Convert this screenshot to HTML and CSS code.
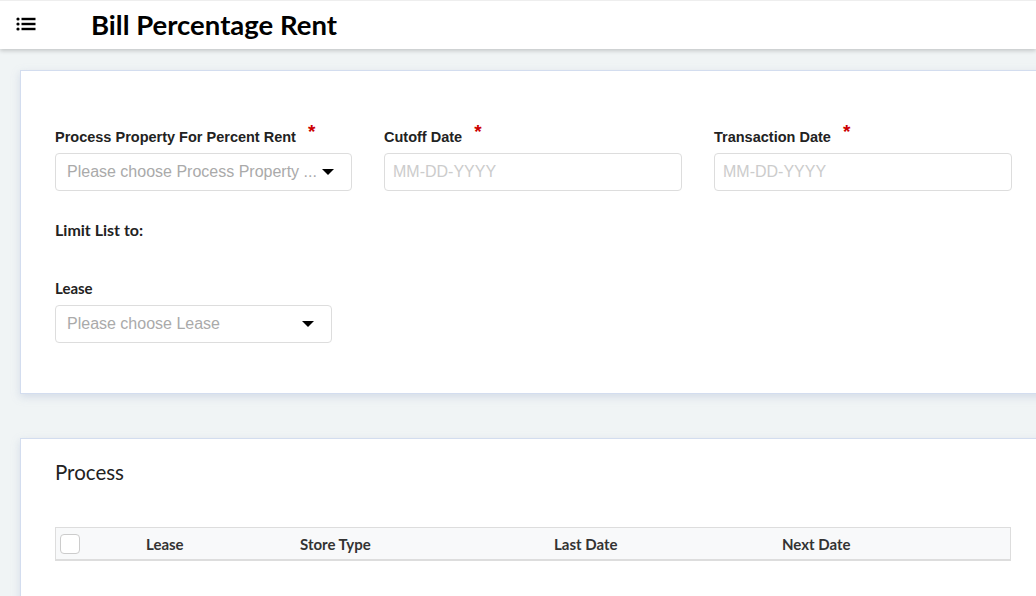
FILE: index.html
```html
<!DOCTYPE html>
<html lang="en">
<head>
  <meta charset="UTF-8" />
  <title>Bill Percentage Rent</title>
  <link rel="stylesheet" href="styles.css">
</head>
<body>
  <header class="topbar">
    <button class="menu-btn" title="Menu">
      <svg viewBox="0 0 20 16" width="20" height="16">
        <circle cx="2" cy="3" r="1.6" fill="#000"></circle>
        <circle cx="2" cy="8" r="1.6" fill="#000"></circle>
        <circle cx="2" cy="13" r="1.6" fill="#000"></circle>
        <rect x="5.5" y="1.8" width="14" height="2.4" fill="#000"></rect>
        <rect x="5.5" y="6.8" width="14" height="2.4" fill="#000"></rect>
        <rect x="5.5" y="11.8" width="14" height="2.4" fill="#000"></rect>
      </svg>
    </button>
    <h1>Bill Percentage Rent</h1>
  </header>

  <main class="content">
    <section class="card filters">
      <div class="field-row">
        <div class="field">
          <label>Process Property For Percent Rent <span class="req">*</span></label>
          <div class="select">
            <span class="placeholder">Please choose Process Property ...</span>
            <span class="caret"></span>
          </div>
        </div>
        <div class="field">
          <label>Cutoff Date <span class="req">*</span></label>
          <input type="text" class="date-input" placeholder="MM-DD-YYYY" />
        </div>
        <div class="field">
          <label>Transaction Date <span class="req">*</span></label>
          <input type="text" class="date-input" placeholder="MM-DD-YYYY" />
        </div>
      </div>

      <h4 class="limit-title">Limit List to:</h4>

      <div class="field lease-field">
        <label class="lato-label">Lease</label>
        <div class="select">
          <span class="placeholder">Please choose Lease</span>
          <span class="caret"></span>
        </div>
      </div>
    </section>

    <section class="card process">
      <h2>Process</h2>
      <table class="grid">
        <thead>
          <tr>
            <th class="col-check"><span class="checkbox"></span></th>
            <th class="col-lease">Lease</th>
            <th class="col-store">Store Type</th>
            <th class="col-last">Last Date</th>
            <th>Next Date</th>
          </tr>
        </thead>
      </table>
    </section>
  </main>
</body>
</html>
```

FILE: styles.css
```css
html, body {
  margin: 0;
  padding: 0;
  height: 100%;
  background: #f0f4f5;
  color: #222;
  font-family: Lato, "Liberation Sans", sans-serif;
  overflow: hidden;
}

.topbar {
  height: 49px;
  background: #fff;
  border-top: 1px solid #eee;
  box-sizing: border-box;
  display: flex;
  align-items: center;
  box-shadow: 0 2px 4px rgba(0, 0, 0, 0.18);
  position: relative;
  z-index: 1;
}

.menu-btn {
  background: none;
  border: none;
  padding: 0;
  margin: -2px 0 0 16px;
  width: 20px;
  height: 16px;
  display: flex;
  cursor: pointer;
}

.topbar h1 {
  margin: -2px 0 0 55px;
  font-size: 27.5px;
  font-weight: bold;
  color: #000;
}

.content {
  padding: 21px 0 0 20px;
  width: 1060px;
}

.card {
  background: #fff;
  border: 1px solid #d3ddef;
  box-shadow: 0 3px 8px rgba(160, 175, 205, 0.35);
  padding: 0 34px;
}

.filters {
  height: 324px;
  padding-top: 52px;
  box-sizing: border-box;
}

.field-row {
  display: grid;
  grid-template-columns: 297px 298px 298px;
  column-gap: 32px;
}

.field label {
  display: block;
  font-family: "Liberation Sans", Arial, sans-serif;
  font-weight: bold;
  font-size: 14.5px;
  color: #222;
  height: 24px;
  line-height: 26px;
  margin-bottom: 6px;
}

.req {
  color: #c00;
  font-size: 19px;
  position: relative;
  top: -4px;
  margin-left: 8px;
}

.select, .date-input {
  height: 38px;
  border: 1px solid #ddd;
  border-radius: 4px;
  box-sizing: border-box;
  background: #fff;
}

.select {
  display: flex;
  align-items: center;
  justify-content: space-between;
  padding: 0 17px 0 11px;
}

.placeholder {
  font-family: "Liberation Sans", Arial, sans-serif;
  font-size: 16px;
  color: #aaa;
}

.caret {
  width: 0;
  height: 0;
  border-left: 6px solid transparent;
  border-right: 6px solid transparent;
  border-top: 6px solid #000;
}

.date-input {
  width: 100%;
  padding: 0 8px;
  font-family: "Liberation Sans", Arial, sans-serif;
  font-size: 16px;
  outline: none;
}

.date-input::placeholder {
  color: #ccc;
}

.limit-title {
  margin: 29px 0 0;
  font-size: 16px;
  font-weight: bold;
  line-height: 20px;
}

.lease-field {
  width: 277px;
  margin-top: 35px;
}

.field .lato-label {
  font-family: Lato, sans-serif;
  font-size: 15px;
}

.process {
  margin-top: 44px;
  height: 200px;
  padding-top: 20px;
  box-sizing: border-box;
}

.process h2 {
  margin: 0;
  font-size: 20.5px;
  font-weight: normal;
  line-height: 26px;
}

.grid {
  margin-top: 42px;
  width: 956px;
  border-collapse: collapse;
  background: #f8f9fa;
  border: 1px solid #ddd;
  border-bottom: 2px solid #ddd;
}

.grid th {
  height: 31px;
  padding: 0;
  text-align: left;
  font-size: 15px;
  font-weight: bold;
  color: #333;
}

.col-check {
  width: 90px;
}

.checkbox {
  display: block;
  margin-left: 4px;
  width: 18px;
  height: 18px;
  border: 1px solid #ccc;
  border-radius: 4px;
  background: #fff;
}

.col-lease {
  width: 154px;
}

.col-store {
  width: 254px;
}

.col-last {
  width: 228px;
}
```
